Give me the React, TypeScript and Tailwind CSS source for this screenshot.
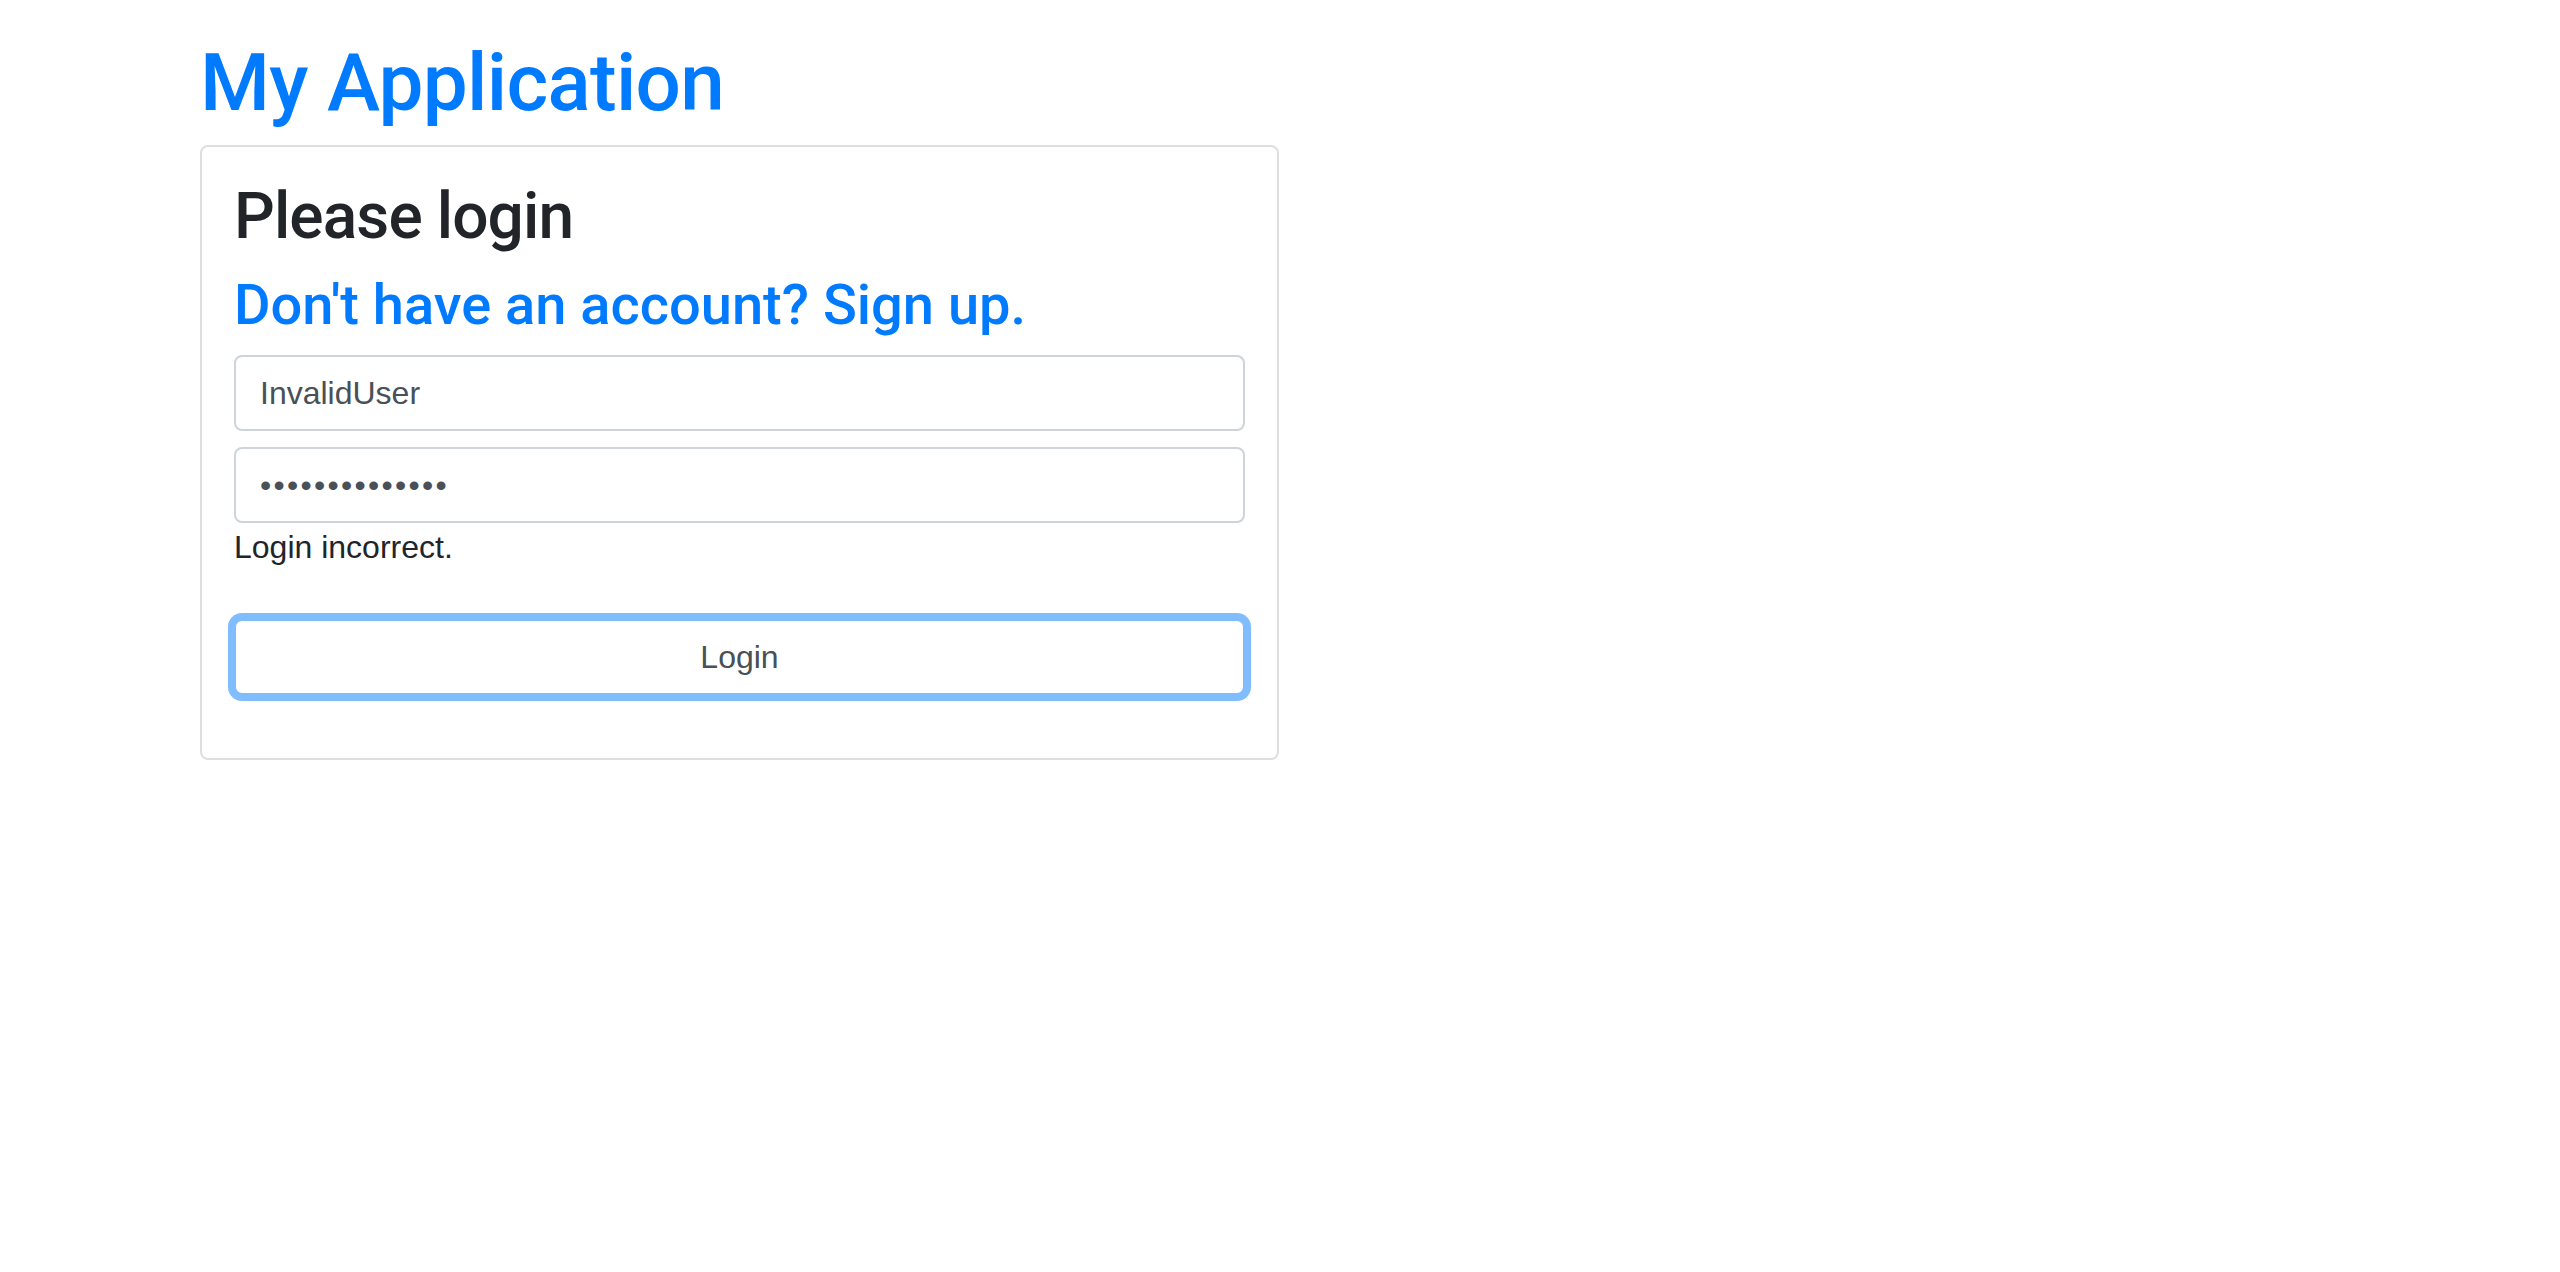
import React, { useRef, useState } from 'react'

const LoginPage = () => {
  const userRef = useRef<HTMLInputElement>(null)
  const passRef = useRef<HTMLInputElement>(null)
  const [error] = useState('Login incorrect.')

  const handleSubmit = (e: React.FormEvent) => {
    e.preventDefault()
  }

  return (
    <div className="min-h-screen bg-white text-[#212529] font-['Liberation_Sans',Arial,sans-serif]">
      <div className="ml-[200px] w-[1079px] pt-[35px]">
        <h1 className="font-['Roboto',sans-serif] text-[80px] leading-[96px] font-medium tracking-[-0.7px] text-[#007bff] mb-[14px]">
          My Application
        </h1>
        <div className="border-2 border-[#dfdfdf] rounded-[8px] px-[32px] pt-[32px] pb-[63px]">
          <h2 className="font-['Roboto',sans-serif] text-[64px] leading-[76.8px] font-medium tracking-[-0.9px] mb-[16px]">
            Please login
          </h2>
          <h3 className="font-['Roboto',sans-serif] text-[56px] leading-[67.2px] font-medium mb-[16px]">
            <a href="#" className="text-[#007bff]">
              Don't have an account? Sign up.
            </a>
          </h3>
          <form onSubmit={handleSubmit} className="flex flex-col">
            <input
              ref={userRef}
              type="text"
              defaultValue="InvalidUser"
              className="h-[76px] w-full border-2 border-[#ced4da] rounded-[8px] px-[24px] text-[32px] text-[#495057] outline-none mb-[16px]"
            />
            <input
              ref={passRef}
              type="password"
              defaultValue="InvalidPasswd!"
              className="h-[76px] w-full border-2 border-[#ced4da] rounded-[8px] px-[24px] text-[32px] tracking-[2.3px] text-[#495057] outline-none"
            />
            <div className="text-[32px] leading-[48px]">{error}</div>
            <button
              type="submit"
              className="mt-[48px] h-[76px] w-full border-2 border-[#80bdff] rounded-[8px] bg-white text-[32px] text-[#495057] shadow-[0_0_0_6px_#80bdff]"
            >
              Login
            </button>
          </form>
        </div>
      </div>
    </div>
  )
}

export default LoginPage
